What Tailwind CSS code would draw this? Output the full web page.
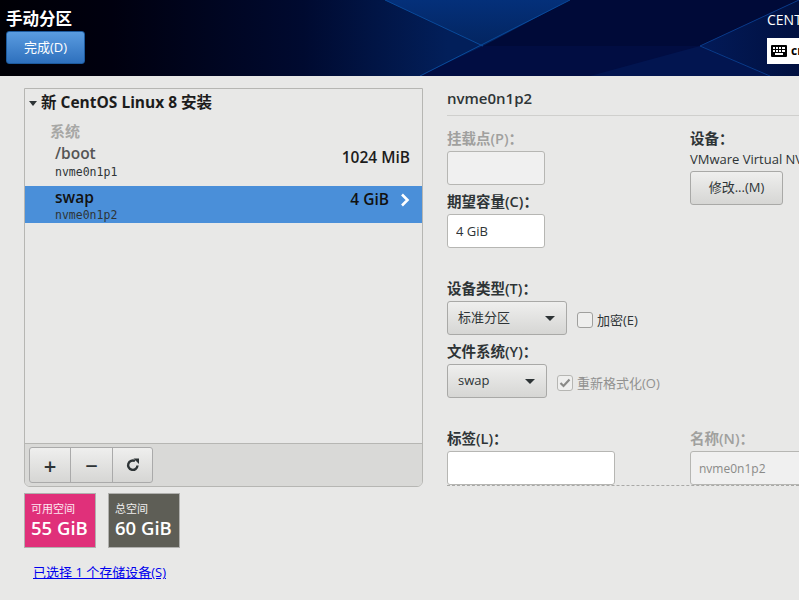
<!DOCTYPE html>
<html lang="zh-CN">
<head>
    <meta charset="UTF-8">
    <title>手动分区</title>
    <script src="https://cdn.jsdelivr.net/npm/@tailwindcss/browser@4"></script>
</head>
<body class="w-[799px] h-[600px] overflow-hidden bg-[#e8e8e7] text-[#2e3436] font-['Open_Sans','Noto_Sans_CJK_SC',sans-serif] text-[13px]">

    <header class="relative h-[76px] bg-[#010a38] overflow-hidden">
        <!-- background facets -->
        <svg class="absolute inset-0" width="799" height="76" viewBox="0 0 799 76">
            <defs>
                <linearGradient id="base" x1="0" y1="0" x2="1" y2="0">
                    <stop offset="0" stop-color="#000006"/>
                    <stop offset="0.14" stop-color="#00000f"/>
                    <stop offset="0.38" stop-color="#000a30"/>
                    <stop offset="0.56" stop-color="#021f5a"/>
                </linearGradient>
                <linearGradient id="top" x1="0" y1="0" x2="0" y2="1">
                    <stop offset="0" stop-color="#04307a"/>
                    <stop offset="1" stop-color="#032560"/>
                </linearGradient>
                <linearGradient id="right" x1="0" y1="0" x2="1" y2="0">
                    <stop offset="0" stop-color="#021a58"/>
                    <stop offset="1" stop-color="#011040"/>
                </linearGradient>
            </defs>
            <rect width="799" height="76" fill="url(#base)"/>
            <polygon points="385,0 570,0 483,46" fill="url(#top)"/>
            <polygon points="483,46 570,0 799,0 700,46" fill="#000a38"/>
            <polygon points="483,46 700,46 770,76 420,76" fill="#010d42"/>
            <polygon points="700,46 799,0 799,76 770,76" fill="url(#right)"/>
            <polygon points="590,76 700,46 770,76" fill="#021550"/>
            <line x1="385" y1="0" x2="483" y2="46" stroke="#0a4a9a"/>
            <line x1="420" y1="76" x2="570" y2="0" stroke="#0a4a9a"/>
            <line x1="700" y1="46" x2="799" y2="0" stroke="#0a3a88"/>
            <line x1="700" y1="46" x2="770" y2="76" stroke="#0a3a88"/>
        </svg>
        <div class="relative flex justify-between h-full">
            <div class="pl-[6px] pt-[9px]">
                <h1 class="text-white text-[16.5px] font-bold leading-[20px]">手动分区</h1>
                <button class="mt-[2px] w-[79px] h-[33px] rounded-[3px] border border-[#1c5a9e] bg-gradient-to-b from-[#5a9ce0] to-[#2e70bd] text-white text-[13px]">完成(D)</button>
            </div>
            <div class="w-[32px] pt-[10px] overflow-hidden shrink-0">
                <div class="text-white text-[14px] leading-[20px] whitespace-nowrap">CENTOS</div>
                <div class="mt-[8px] h-[26px] w-[40px] bg-white flex items-center pl-[4px] gap-[4px]">
                    <svg width="16" height="12" viewBox="0 0 16 12"><rect width="16" height="12" rx="1" fill="#000"/><g fill="#fff"><rect x="2" y="2" width="2" height="2"/><rect x="5" y="2" width="2" height="2"/><rect x="8" y="2" width="2" height="2"/><rect x="11" y="2" width="3" height="2"/><rect x="2" y="5" width="2" height="2"/><rect x="5" y="5" width="2" height="2"/><rect x="8" y="5" width="2" height="2"/><rect x="11" y="5" width="3" height="2"/><rect x="4" y="8" width="8" height="2"/></g></svg>
                    <span class="text-black font-bold text-[12px]">cn</span>
                </div>
            </div>
        </div>
    </header>

    <main class="flex items-start pl-[24px] pt-[12px]">
        <div class="w-[399px] shrink-0">
            <section class="h-[399px] border border-[#b6b6b3] rounded-b-[6px] flex flex-col overflow-hidden">
                <div class="flex-1">
                    <div class="h-[28px] flex items-center pl-[4px] text-[15.5px] font-bold text-[#1c1c1c] whitespace-pre">
                        <span class="w-0 h-0 border-x-[4px] border-x-transparent border-t-[5px] border-t-[#2e3436] mr-[4px]"></span>新 CentOS Linux 8 安装</div>
                    <div class="pl-[25px] mt-[5px] text-[15px] font-bold text-[#a7a7a5] leading-[18px]">系统</div>
                    <div class="h-[46px] pl-[30px] pr-[12px] pt-[3px] flex justify-between items-start">
                        <div>
                            <div class="text-[15.5px] font-semibold text-[#555] leading-[20px]">/boot</div>
                            <div class="text-[11.5px] leading-[16px] mt-[1px] font-['DejaVu_Sans_Mono',monospace]">nvme0n1p1</div>
                        </div>
                        <div class="text-[15.5px] font-semibold text-[#1c1c1c] leading-[20px] mt-[4px]">1024 MiB</div>
                    </div>
                    <div class="h-[37px] pl-[30px] pr-[12px] flex justify-between bg-[#4a8fd9]">
                        <div class="pt-[2px]">
                            <div class="text-[15.5px] font-semibold text-[#111] leading-[18px]">swap</div>
                            <div class="text-[11.5px] leading-[16px] mt-[1px] font-['DejaVu_Sans_Mono',monospace]">nvme0n1p2</div>
                        </div>
                        <div class="flex items-center gap-[11px] pb-[9px]">
                            <span class="text-[15.5px] font-semibold text-[#111]">4 GiB</span>
                            <svg width="10" height="14" viewBox="0 0 10 14"><path d="M2 1.5 L7.5 7 L2 12.5" fill="none" stroke="#fff" stroke-width="2.6"/></svg>
                        </div>
                    </div>
                </div>
                <div class="h-[43px] border-t border-[#b6b6b3] bg-[#d9d9d7] pl-[4px] pt-[3px]">
                    <div class="inline-flex h-[36px] border border-[#aaa] rounded-[3px] bg-gradient-to-b from-[#efefee] to-[#d6d6d4] overflow-hidden">
                        <button class="w-[41px] border-r border-[#aaa] text-[22px] leading-none font-semibold">+</button>
                        <button class="w-[42px] border-r border-[#aaa] text-[22px] leading-none font-semibold">−</button>
                        <button class="w-[39px] flex items-center justify-center">
                            <svg width="14" height="14" viewBox="0 0 14 14"><path d="M11.5 7.5 A4.7 4.7 0 1 1 9 3" fill="none" stroke="#2e3436" stroke-width="2.4"/><polygon points="7.5,0.5 13,0.5 13,6" fill="#2e3436"/></svg>
                        </button>
                    </div>
                </div>
            </section>

            <div class="flex gap-[12px] mt-[6px]">
                <div class="w-[72px] h-[55px] border border-[#b0b0ae] bg-[#e0307a] text-white px-[6px] pt-[7px]">
                    <div class="text-[11px] leading-[16px] text-white/90">可用空间</div>
                    <div class="text-[18.5px] font-semibold leading-[22px] whitespace-nowrap">55 GiB</div>
                </div>
                <div class="w-[72px] h-[55px] border border-[#b0b0ae] bg-[#5e5e56] text-white px-[6px] pt-[7px]">
                    <div class="text-[11px] leading-[16px] text-white/90">总空间</div>
                    <div class="text-[18.5px] font-semibold leading-[22px] whitespace-nowrap">60 GiB</div>
                </div>
            </div>
            <a href="#" class="block mt-[15px] ml-[9px] text-[#0000ee] underline text-[13px] leading-[18px]">已选择 1 个存储设备(S)</a>
        </div>

        <div class="ml-[24px] w-[352px] shrink-0 h-[400px] overflow-hidden">
            <h2 class="h-[28px] w-full border-b border-[#cfcfcd] text-[15px] font-semibold text-[#2e3436] leading-[21px]">nvme0n1p2</h2>
            <div class="grid grid-cols-[243px_1fr] mt-[13px]">
                <div>
                    <label class="block font-semibold text-[14.5px] text-[#a0a09e] leading-[20px]">挂载点(P)：</label>
                    <div class="mt-[2px] w-[98px] h-[34px] rounded-[3px] border border-[#b6b6b3] bg-[#f0f0f0]"></div>
                    <label class="block mt-[7px] font-semibold text-[14.5px] leading-[20px]">期望容量(C)：</label>
                    <input value="4 GiB" class="mt-[2px] w-[98px] h-[34px] rounded-[3px] border border-[#b6b6b3] bg-white px-[8px] text-[13px]">
                </div>
                <div class="whitespace-nowrap">
                    <label class="block font-semibold text-[14.5px] leading-[20px]">设备：</label>
                    <div class="text-[13px] leading-[20px]">VMware Virtual NVMe Disk</div>
                    <button class="mt-[2px] w-[93px] h-[34px] rounded-[3px] border border-[#a9a9a7] bg-gradient-to-b from-[#efefee] to-[#d6d6d4] text-[13px]">修改...(M)</button>
                </div>
            </div>
            <label class="block mt-[31px] font-semibold text-[14.5px] leading-[20px]">设备类型(T)：</label>
            <div class="mt-[2px] flex items-center">
                <button class="w-[120px] h-[34px] rounded-[3px] border border-[#a9a9a7] bg-gradient-to-b from-[#efefee] to-[#d6d6d4] flex items-center justify-between pl-[10px] pr-[11px] text-[13px]">标准分区 <span class="w-0 h-0 border-x-[5px] border-x-transparent border-t-[5px] border-t-[#2e3436]"></span></button>
                <span class="ml-[10px] mt-[3px] w-[16px] h-[16px] rounded-[3px] border border-[#a0a09e] bg-[#efefee]"></span>
                <span class="ml-[4px] mt-[5px] text-[13px]">加密(E)</span>
            </div>
            <label class="block mt-[7px] font-semibold text-[14.5px] leading-[20px]">文件系统(Y)：</label>
            <div class="mt-[2px] flex items-center">
                <button class="w-[100px] h-[34px] rounded-[3px] border border-[#a9a9a7] bg-gradient-to-b from-[#efefee] to-[#d6d6d4] flex items-center justify-between pl-[10px] pr-[11px] text-[13px]">swap <span class="w-0 h-0 border-x-[5px] border-x-transparent border-t-[5px] border-t-[#2e3436]"></span></button>
                <span class="ml-[10px] mt-[3px] w-[16px] h-[16px] rounded-[3px] border border-[#b6b6b3] bg-[#efefee] flex items-center justify-center">
                    <svg width="12" height="10" viewBox="0 0 12 10"><path d="M1.5 5 L4.5 8 L10.5 1.5" fill="none" stroke="#8a8a88" stroke-width="2.2"/></svg>
                </span>
                <span class="ml-[4px] mt-[5px] text-[13px] text-[#919190]">重新格式化(O)</span>
            </div>
            <div class="grid grid-cols-[243px_1fr] mt-[31px] border-b border-dashed border-[#a9a9a7]">
                <div>
                    <label class="block font-semibold text-[14.5px] leading-[20px]">标签(L)：</label>
                    <input class="mt-[2px] block w-[168px] h-[34px] rounded-[3px] border border-[#b6b6b3] bg-white">
                </div>
                <div>
                    <label class="block font-semibold text-[14.5px] text-[#a0a09e] leading-[20px]">名称(N)：</label>
                    <input value="nvme0n1p2" disabled class="mt-[2px] block w-[120px] h-[34px] rounded-[3px] border border-[#b6b6b3] bg-[#f0f0f0] px-[8px] text-[12px] text-[#8a8a88]">
                </div>
            </div>
        </div>
    </main>
</body>
</html>
